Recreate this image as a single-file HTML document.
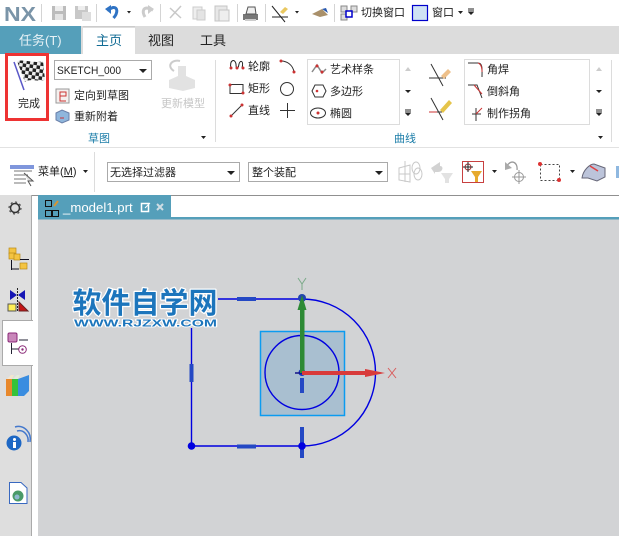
<!DOCTYPE html>
<html><head><meta charset="utf-8"><style>
html,body{margin:0;padding:0}
body{width:619px;height:536px;overflow:hidden;position:relative;background:#fff;font-family:"Liberation Sans","Noto Sans CJK SC",sans-serif}
svg{position:absolute;left:0;top:0}
text{font-family:"Liberation Sans","Noto Sans CJK SC",sans-serif;font-size:11px;fill:#222}
</style></head><body>
<svg width="619" height="536" viewBox="0 0 619 536">
<defs>
<pattern id="chk" width="7" height="7" patternUnits="userSpaceOnUse" patternTransform="rotate(8)"><rect width="7" height="7" fill="#eee"/><rect width="3.500" height="3.500" fill="#222"/><rect x="3.500" y="3.500" width="3.500" height="3.500" fill="#222"/></pattern>
</defs>
<!-- top bar -->
<rect width="619" height="26" fill="#fff"/>
<text x="4" y="21" textLength="32" lengthAdjust="spacingAndGlyphs" style="font-size:20px;font-weight:bold;fill:#7a94a8">NX</text>
<g stroke="#d4d4d4"><path d="M41.500 4V22M96.500 4V22M160.500 4V22M237.500 4V22M265.500 4V22M334.500 4V22"/></g>
<rect x="52" y="6" width="14" height="14" fill="#bcbcbc"/><rect x="55" y="6" width="8" height="5" fill="#eee"/><rect x="55" y="14" width="8" height="6" fill="#e4e4e4"/>
<rect x="75" y="6" width="13" height="13" fill="#c8c8c8"/><rect x="78" y="6" width="7" height="4" fill="#eee"/><rect x="82" y="12" width="9" height="9" fill="#ddd"/>
<path d="M107 10L113 7.500C118 7 118 13 113.500 18" fill="none" stroke="#2f73c4" stroke-width="3"/><path d="M105 9L111 5V14Z" fill="#2f73c4"/>
<path d="M127 11l4 0-2 2.500z" fill="#222"/>
<path d="M153 10L147 8C143 8 142 12 145 17" fill="none" stroke="#ccc" stroke-width="3"/><path d="M154 9L148 5V14Z" fill="#ccc"/>
<path d="M170 18L181 6M170 8L181 18" stroke="#c8c8c8" stroke-width="1.500"/>
<rect x="193" y="7" width="9" height="12" fill="#eee" stroke="#ccc"/><rect x="197" y="10" width="8" height="10" fill="#e4e4e4" stroke="#ccc"/>
<rect x="215" y="6" width="12" height="15" fill="#e8e8e8" stroke="#c4c4c4"/><rect x="219" y="10" width="10" height="11" fill="#eee" stroke="#c4c4c4"/>
<path d="M243 14H258V20H243Z" fill="#777"/><path d="M246 14L248 7H255L256 14Z" fill="#eee" stroke="#555"/><path d="M245 19H256V21H245Z" fill="#ccc"/>
<path d="M272 6L285 22" stroke="#222"/><path d="M272 17H288" stroke="#222"/><path d="M280 12L285 7L288 9L283 14Z" fill="#e9c860"/>
<path d="M295 11l4 0-2 2.500z" fill="#222"/>
<path d="M312 14L322 9L328 15L320 17Z" fill="#a9906a"/><path d="M322 9L326 8L328 13Z" fill="#2859b0"/>
<rect x="341" y="6" width="6" height="6" fill="#ddd" stroke="#888"/><rect x="351" y="6" width="6" height="6" fill="#ddd" stroke="#888"/><rect x="341" y="14" width="6" height="6" fill="#ddd" stroke="#888"/><rect x="346" y="11" width="6" height="6" fill="#fff" stroke="#00c" stroke-width="1.500"/>
<text x="361" y="16">切换窗口</text>
<rect x="412.500" y="5.500" width="15" height="15" fill="#cfe2f4" stroke="#00c" stroke-width="1.200"/>
<text x="432" y="16">窗口</text>
<path d="M458 11l5 0-2.500 3z" fill="#222"/><path d="M468 9h6M468 11h6" stroke="#222"/><path d="M468 12l6 0-3 3z" fill="#222"/>

<!-- tabs -->
<rect y="26" width="619" height="28" fill="#dcdcdc"/>
<rect y="26" width="81" height="28" fill="#559fba"/>
<text x="19" y="45" style="font-size:13px;fill:#e8f2f6">任务(T)</text>
<rect x="83" y="27" width="52" height="27" fill="#fff"/><rect x="83" y="26.500" width="52" height="1" fill="#bbb"/>
<text x="96" y="45" style="font-size:13px;fill:#116b94">主页</text>
<text x="148" y="45" style="font-size:13px">视图</text>
<text x="200" y="45" style="font-size:13px">工具</text>

<!-- ribbon -->
<path d="M0 147.500H619" stroke="#e2e2e2"/>
<rect x="6.500" y="54.500" width="41" height="65" fill="#fff" stroke="#ee3333" stroke-width="3"/>
<path d="M17 61C25 59 35 64 43 61L45 80C37 82 30 78 25 82Z" fill="url(#chk)"/>
<path d="M14 62L24 90" stroke="#5a58c8" stroke-width="1.500"/>
<text x="18" y="107">完成</text>
<rect x="54.500" y="60.500" width="97" height="19" fill="#fff" stroke="#aaa"/>
<text x="57" y="74" textLength="64" lengthAdjust="spacingAndGlyphs">SKETCH_000</text>
<path d="M139 69l8 0-4 4z" fill="#222"/>
<!-- reorient icon -->
<rect x="56" y="89" width="13" height="14" fill="#f5f0ee" stroke="#999"/><path d="M60 92h6v4h-6zM60 96v5h6" fill="none" stroke="#c33"/>
<text x="74" y="99">定向到草图</text>
<path d="M56 113L62 110L69 113V120L62 123L56 120Z" fill="#8fb6dc" stroke="#6a7fa8"/><path d="M60 118h4" stroke="#c33"/>
<text x="74" y="120">重新附着</text>
<path d="M169 80L178 76V66H186V76L195 80V88L183 91L169 88Z" fill="#e2e2e2"/>
<path d="M174 71C166 66 172 59 180 61" fill="none" stroke="#ccc" stroke-width="2"/>
<text x="161" y="107" style="fill:#c6c6c6">更新模型</text>
<text x="88" y="142" style="fill:#1a7ca8">草图</text>
<path d="M201 136l5 0-2.500 3z" fill="#222"/>
<path d="M215.500 60V142" stroke="#dcdcdc"/>
<!-- curves col 1 -->
<path d="M231 68C229 60 235 58 236 64C236 70 238 70 239 64C240 60 244 60 242 68" fill="none" stroke="#222"/><circle cx="231" cy="68" r="1.500" fill="#c33"/><circle cx="237" cy="68" r="1.500" fill="#c33"/><circle cx="243" cy="68" r="1.500" fill="#c33"/>
<text x="248" y="70">轮廓</text>
<rect x="230" y="84.500" width="13" height="9" fill="#fff" stroke="#333"/><circle cx="230" cy="85" r="1.500" fill="#c33"/><circle cx="243" cy="93" r="1.500" fill="#c33"/>
<text x="248" y="92">矩形</text>
<path d="M231 116L242 105" stroke="#333"/><circle cx="231" cy="116" r="1.500" fill="#c33"/><circle cx="242" cy="105" r="1.500" fill="#c33"/>
<text x="248" y="114">直线</text>
<path d="M281 61C287 61 293 65 294 72" fill="none" stroke="#333"/><circle cx="281" cy="61" r="1.500" fill="#c33"/><circle cx="294" cy="72" r="1.500" fill="#c33"/>
<circle cx="287" cy="89" r="6.500" fill="none" stroke="#333"/>
<path d="M280 110.500H295M287.500 103V118" stroke="#333"/>
<!-- gallery 1 -->
<rect x="307.500" y="59.500" width="92" height="65" fill="#fff" stroke="#dcdcdc"/>
<path d="M312 72L317 65L322 73L326 69" fill="none" stroke="#888" stroke-width="1.500"/><circle cx="317" cy="66" r="1.500" fill="#c33"/><circle cx="322" cy="72" r="1.500" fill="#c33"/>
<text x="330" y="73">艺术样条</text>
<path d="M312 91L315 85H323L326 91L323 97H315Z" fill="#fff" stroke="#333"/><circle cx="317" cy="91" r="1.300" fill="#c33"/>
<text x="330" y="95">多边形</text>
<ellipse cx="318" cy="113" rx="7.500" ry="5" fill="#fff" stroke="#333"/><circle cx="318" cy="113" r="1.500" fill="#c33"/>
<text x="330" y="117">椭圆</text>
<path d="M405 71l6 0-3-4z" fill="#ccc"/><path d="M405 90l6 0-3 3z" fill="#222"/><path d="M405 110h6M405 112h6" stroke="#222"/><path d="M405 113l6 0-3 3z" fill="#222"/>
<!-- trim icons -->
<path d="M431 64L443 86M429 78H446" stroke="#333"/><path d="M441 76L448 69L451 72L444 79Z" fill="#eec08a"/>
<path d="M431 98L443 120M429 112H442" stroke="#333"/><path d="M429 112h8" stroke="#c33"/><path d="M440 110L449 100L452 103L443 113Z" fill="#e5c44a"/>
<!-- gallery 2 -->
<rect x="464.500" y="59.500" width="125" height="65" fill="#fff" stroke="#dcdcdc"/>
<path d="M468 63H478C483 63 482 70 482 77" fill="none" stroke="#333"/><path d="M478 63C481 64 482 68 482 72" fill="none" stroke="#c33"/>
<text x="487" y="73">角焊</text>
<path d="M468 85H477L482 98" fill="none" stroke="#333"/><path d="M474 85L482 94" stroke="#c33"/>
<text x="487" y="95">倒斜角</text>
<path d="M472 114H481M476 108V121" stroke="#333"/><path d="M476 114L482 108" stroke="#c33"/>
<text x="487" y="117">制作拐角</text>
<path d="M596 71l6 0-3-4z" fill="#ccc"/><path d="M596 90l6 0-3 3z" fill="#222"/><path d="M596 110h6M596 112h6" stroke="#222"/><path d="M596 113l6 0-3 3z" fill="#222"/>
<text x="394" y="142" style="fill:#1a7ca8">曲线</text>
<path d="M598 136l5 0-2.500 3z" fill="#222"/>
<path d="M611.500 60V142" stroke="#dcdcdc"/>

<!-- toolbar -->
<rect x="10" y="165" width="24" height="4" fill="#7f96dc"/><path d="M14 171H32M14 175H28M14 179H26M14 183H26" stroke="#777"/><path d="M24 173L33 181H28L31 186" fill="#ddd" stroke="#555"/>
<text x="38" y="175">菜单(<tspan text-decoration="underline">M</tspan>)</text>
<path d="M83 170l5 0-2.500 3z" fill="#222"/>
<path d="M94.500 152V192" stroke="#dcdcdc"/>
<rect x="107.500" y="162.500" width="132" height="19" fill="#fff" stroke="#aaa"/>
<text x="110" y="176">无选择过滤器</text>
<path d="M227 171l8 0-4 4z" fill="#222"/>
<rect x="248.500" y="162.500" width="139" height="19" fill="#fff" stroke="#aaa"/>
<text x="252" y="176">整个装配</text>
<path d="M375 171l8 0-4 4z" fill="#222"/>
<g fill="none" stroke="#c8c8c8"><path d="M399 168L410 165V182L399 180ZM399 174L410 174M405 161V182"/><ellipse cx="416" cy="168" rx="4" ry="6"/><ellipse cx="418" cy="174" rx="4" ry="6"/></g>
<path d="M431 168L440 162V166C444 166 443 172 438 172H435V174Z" fill="#d2d2d2"/><path d="M441 173H453L449 179V183H445V179Z" fill="#e2e2e2"/>
<rect x="462.500" y="161.500" width="21" height="21" fill="#fff" stroke="#c84040"/>
<circle cx="468" cy="167" r="3" fill="none" stroke="#a33"/><path d="M468 162V172M463 167H473" stroke="#222"/>
<path d="M471 171H482L478 177V182H475V177Z" fill="#e6aa2e"/>
<path d="M492 170l5 0-2.500 3z" fill="#222"/>
<path d="M506 167C512 158 518 163 517 170" fill="none" stroke="#999" stroke-width="1.300"/><path d="M505 162L505 170L512 168Z" fill="#aaa"/>
<circle cx="519" cy="177" r="4.500" fill="none" stroke="#999"/><path d="M519 170V184M512 177H526" stroke="#999"/>
<rect x="540.500" y="164.500" width="19" height="16" fill="#fff" stroke="#444" stroke-dasharray="2 2"/>
<circle cx="540" cy="164" r="2" fill="#d33"/><circle cx="559" cy="180" r="2" fill="#d33"/>
<path d="M570 170l5 0-2.500 3z" fill="#222"/>
<path d="M582 178C583 170 590 164 594 164L605 168V177L597 181L588 178Z" fill="#bcc4da" stroke="#667"/><path d="M590 166L598 171" stroke="#e04040" stroke-width="1.500"/>
<rect x="616" y="166" width="3" height="12" fill="#8fb8e0"/>
<path d="M0 195.500H619" stroke="#909090"/>

<!-- left panel -->
<rect y="195" width="32" height="341" fill="#dedede"/>
<path d="M31.500 195V536" stroke="#aaa"/>
<rect x="32" y="196" width="6" height="340" fill="#fff"/>
<circle cx="15" cy="208" r="4.500" fill="none" stroke="#333" stroke-width="1.500"/><circle cx="15" cy="208" r="6" fill="none" stroke="#333" stroke-dasharray="2 2.700"/>
<!-- panel icons -->
<g fill="#f4c441" stroke="#b98a18" stroke-width=".7"><rect x="9" y="248" width="7" height="6"/><rect x="9" y="253" width="6" height="6"/><rect x="14" y="254" width="6" height="6"/><rect x="20" y="263" width="7" height="6"/></g>
<path d="M11.500 260V270M11.500 269H19M20 259.500H29" stroke="#112" fill="none"/>
<path d="M10 290L17 295L10 300ZM25 290L18 295L25 300Z" fill="#1414b4"/><path d="M17.500 288V312" stroke="#222" stroke-dasharray="2 1"/>
<rect x="8" y="304" width="8" height="7" fill="#ffee55" stroke="#555"/><path d="M19 302L28 311H19Z" fill="#c41414" stroke="#622"/>
<rect x="2.500" y="320.500" width="30" height="45" fill="#fff" stroke="#aaa"/><rect x="32" y="321" width="2" height="44" fill="#fff"/>
<rect x="8" y="333" width="9" height="9" rx="1.500" fill="#c987ba" stroke="#8a2a78"/><path d="M11.500 343V354M11.500 349H19M19 340H28" stroke="#223" fill="none"/>
<circle cx="22.500" cy="349.500" r="3.800" fill="none" stroke="#8a2a78"/><circle cx="22.500" cy="349.500" r="1.200" fill="#8a2a78"/>
<path d="M7 379L11 375H14L12 379Z" fill="#f3e6d0"/><path d="M13 379L17 375H20L18 379Z" fill="#e4eddc"/>
<path d="M6 379H12V396H6Z" fill="#e8882c"/><path d="M12 379H18V396H12Z" fill="#36c23a"/><path d="M18 379L29 375V391L24 396H18Z" fill="#3a8de0"/>
<circle cx="14" cy="443" r="7.500" fill="#1d67c4"/><rect x="13" y="442" width="3" height="6" fill="#fff"/><circle cx="14.500" cy="439.500" r="1.500" fill="#fff"/>
<path d="M17 431C24 429 29 436 28 442M15 427C24 424 32 433 30 442" fill="none" stroke="#4478cc" stroke-width="1.500"/>
<path d="M9.500 482.500H21L27 488V503.500H9.500Z" fill="#fff" stroke="#3868c0"/><circle cx="18" cy="496" r="5.500" fill="#4a9a68"/><circle cx="17" cy="497" r="2.500" fill="#8fb8d0"/>

<!-- doc tab -->
<rect x="38" y="195" width="133" height="23" fill="#559fba"/>
<rect x="38" y="217" width="581" height="2.500" fill="#559fba"/>
<g fill="none" stroke="#111"><rect x="45.500" y="200.500" width="6" height="6"/><rect x="45.500" y="210.500" width="6" height="6"/><rect x="52.500" y="210.500" width="6" height="6"/></g>
<path d="M54 206L58 201" stroke="#d69432" stroke-width="2"/>
<text x="63" y="212" style="font-size:13.200px;fill:#fff">_model1.prt</text>
<rect x="141.500" y="203.500" width="7" height="8" fill="none" stroke="#fff" stroke-width="1.500"/><path d="M145 208L150 203" stroke="#fff"/>
<path d="M157 204L163 210M163 204L157 210" stroke="#cfdde4" stroke-width="2"/>

<!-- canvas -->
<rect x="38" y="219.500" width="581" height="316.500" fill="#d2d3d5"/>
<rect x="260.500" y="331.500" width="84" height="84" fill="#a9bfd0" stroke="#0b9bf0" stroke-width="1.500"/>
<g fill="none" stroke="#0000e0" stroke-width="1.400">
<path d="M218 299H302A73.500 73.500 0 0 1 302 446H191.500V328"/>
<circle cx="302" cy="372.500" r="37"/>
</g>
<g fill="#2448c4" stroke="none"><rect x="237" y="297" width="19" height="4"/><rect x="237" y="444.500" width="19" height="4"/><rect x="189.500" y="364" width="4" height="18"/><rect x="300" y="378" width="4" height="15"/><rect x="300" y="427" width="4" height="31"/></g>
<circle cx="302" cy="298" r="4" fill="#2244b0"/><circle cx="191.500" cy="446" r="3.800" fill="#0000e0"/><circle cx="302" cy="446" r="3.800" fill="#0000e0"/><circle cx="302" cy="372.500" r="3.500" fill="#1133c0"/>
<path d="M295 373H302" stroke="#118" stroke-width="1.500"/>
<rect x="300" y="305" width="4.500" height="68" fill="#2d8a35"/>
<path d="M302 295L297.500 310H306.500Z" fill="#2d8a35"/>
<path d="M298 278L302 284L306 278M302 284V290" fill="none" stroke="#7aa988" stroke-width="1"/>
<rect x="302" y="371" width="64" height="4" fill="#d83a3a"/>
<path d="M365 369L385 373L365 377Z" fill="#d83a3a"/>
<path d="M388 368L396 378M396 368L388 378" stroke="#d95c5c"/>
<!-- watermark -->
<text x="72.500" y="313" style="font-size:29px;font-weight:bold;fill:#1c75bc;stroke:#fff;stroke-width:2.500px;paint-order:stroke;stroke-linejoin:round">软件自学网</text>
<text x="74" y="326.500" textLength="143" lengthAdjust="spacingAndGlyphs" style="font-size:10.500px;font-weight:bold;fill:#1c75bc;stroke:#fff;stroke-width:1.800px;paint-order:stroke;stroke-linejoin:round">WWW.RJZXW.COM</text>
</svg>
</body></html>
